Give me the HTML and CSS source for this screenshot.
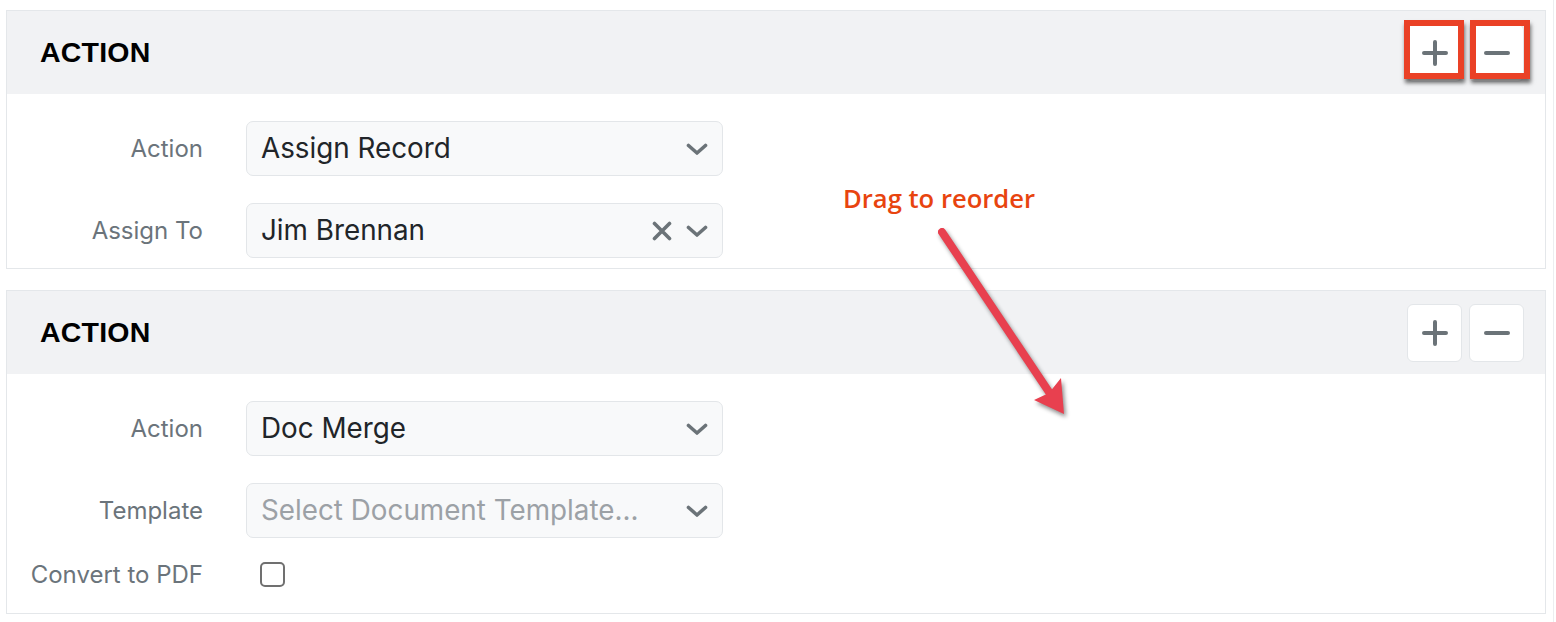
FILE: index.html
```html
<!DOCTYPE html>
<html>
<head>
<meta charset="utf-8">
<link rel="stylesheet" href="styles.css">
</head>
<body>
<div class="page">
  <section class="panel">
    <header class="panel-head">
      <h2 class="panel-title">ACTION</h2>
      <div class="head-btns">
        <button class="icon-btn">
          <svg width="26" height="26" viewBox="0 0 26 26"><path d="M13 2v22M2 13h22" stroke="#6b7378" stroke-width="4" stroke-linecap="round" fill="none"/></svg>
          <span class="mark mark-a"></span>
        </button>
        <button class="icon-btn">
          <svg width="26" height="26" viewBox="0 0 26 26"><path d="M2 13h22" stroke="#6b7378" stroke-width="4" stroke-linecap="round" fill="none"/></svg>
          <span class="mark mark-b"></span>
        </button>
      </div>
    </header>
    <div class="panel-body">
      <div class="row">
        <label class="lbl">Action</label>
        <div class="select"><span class="val">Assign Record</span>
          <span class="icons"><svg class="chev" width="22" height="12" viewBox="0 0 22 12"><path d="M2.5 2.5l8.5 7.5 8.5-7.5" stroke="#6b7378" stroke-width="3.6" stroke-linecap="round" stroke-linejoin="round" fill="none"/></svg></span>
        </div>
      </div>
      <div class="row">
        <label class="lbl">Assign To</label>
        <div class="select"><span class="val">Jim Brennan</span>
          <span class="icons"><svg width="20" height="20" viewBox="0 0 20 20"><path d="M2.5 2.5l15 15M17.5 2.5l-15 15" stroke="#6b7378" stroke-width="3.6" stroke-linecap="round" fill="none"/></svg><svg class="chev" width="22" height="12" viewBox="0 0 22 12"><path d="M2.5 2.5l8.5 7.5 8.5-7.5" stroke="#6b7378" stroke-width="3.6" stroke-linecap="round" stroke-linejoin="round" fill="none"/></svg></span>
        </div>
      </div>
    </div>
  </section>

  <section class="panel">
    <header class="panel-head">
      <h2 class="panel-title">ACTION</h2>
      <div class="head-btns">
        <button class="icon-btn">
          <svg width="26" height="26" viewBox="0 0 26 26"><path d="M13 2v22M2 13h22" stroke="#6b7378" stroke-width="4" stroke-linecap="round" fill="none"/></svg>
        </button>
        <button class="icon-btn">
          <svg width="26" height="26" viewBox="0 0 26 26"><path d="M2 13h22" stroke="#6b7378" stroke-width="4" stroke-linecap="round" fill="none"/></svg>
        </button>
      </div>
    </header>
    <div class="panel-body">
      <div class="row">
        <label class="lbl">Action</label>
        <div class="select"><span class="val">Doc Merge</span>
          <span class="icons"><svg class="chev" width="22" height="12" viewBox="0 0 22 12"><path d="M2.5 2.5l8.5 7.5 8.5-7.5" stroke="#6b7378" stroke-width="3.6" stroke-linecap="round" stroke-linejoin="round" fill="none"/></svg></span>
        </div>
      </div>
      <div class="row">
        <label class="lbl">Template</label>
        <div class="select"><span class="val placeholder">Select Document Template...</span>
          <span class="icons"><svg class="chev" width="22" height="12" viewBox="0 0 22 12"><path d="M2.5 2.5l8.5 7.5 8.5-7.5" stroke="#6b7378" stroke-width="3.6" stroke-linecap="round" stroke-linejoin="round" fill="none"/></svg></span>
        </div>
      </div>
      <div class="row row-check">
        <label class="lbl">Convert to PDF</label>
        <span class="checkbox"></span>
      </div>
    </div>
  </section>

  <div class="annot-text">Drag to reorder</div>
  <svg class="annot-arrow" width="170" height="220" viewBox="0 0 170 220">
    <path d="M22 17L131 180" stroke="#e8404f" stroke-width="8" stroke-linecap="round" fill="none"/>
    <path d="M144 199L141 163L129 178L114 185Z" fill="#e8404f"/>
  </svg>
</div>
</body>
</html>
```

FILE: styles.css
```css
* { box-sizing: border-box; }
html, body { margin: 0; padding: 0; background: #fff; }
body { font-family: Inter, "Noto Sans", sans-serif; }

.page {
  position: relative;
  width: 1554px;
  height: 622px;
  padding: 10px 0 0 6px;
  border-right: 1px solid #eceef0;
}

.panel {
  width: 1540px;
  border: 1px solid #e4e7ea;
  margin-bottom: 21px;
}

.panel-head {
  height: 83px;
  background: #f1f2f4;
  display: flex;
  align-items: center;
  justify-content: space-between;
  padding: 0 21px 0 33px;
}

.panel-title {
  margin: 0;
  font-family: "Liberation Sans", Arial, sans-serif;
  font-weight: bold;
  font-size: 28.5px;
  color: #000;
  letter-spacing: 0.2px;
}

.head-btns { display: flex; gap: 7px; }

.icon-btn {
  position: relative;
  width: 55px;
  height: 58px;
  background: #fff;
  border: 1px solid #e3e6e9;
  border-radius: 6px;
  padding: 0;
  display: flex;
  align-items: center;
  justify-content: center;
}

.mark {
  position: absolute;
  top: -5px;
  width: 60px;
  height: 59px;
  border: 6px solid #ea4126;
  box-shadow: 1px 4px 4px rgba(0, 0, 0, 0.55);
}
.mark-a { left: -4px; }
.mark-b { left: 0px; }

.panel-body {
  padding: 27px 0 10px 0;
  display: flex;
  flex-direction: column;
  gap: 27px;
}

.row {
  display: flex;
  align-items: center;
  gap: 43px;
}

.lbl {
  width: 196px;
  text-align: right;
  font-size: 24px;
  color: #6b747b;
  margin-top: -1px;
}

.select {
  width: 477px;
  height: 55px;
  background: #f8f9fa;
  border: 1px solid #e3e6e9;
  border-radius: 7px;
  display: flex;
  align-items: center;
  justify-content: space-between;
  padding: 0 14px 0 14px;
}

.val {
  font-size: 27.8px;
  color: #212529;
  margin-top: -1px;
}
.val.placeholder { color: #9ca1a6; }

.icons { display: flex; align-items: center; gap: 14px; }
.chev { margin-top: 1px; }

.row-check {
  margin-top: -3px;
  height: 25px;
  margin-bottom: 16px;
}

.checkbox {
  width: 25px;
  height: 25px;
  border: 2px solid #707070;
  border-radius: 5px;
  background: #fff;
  margin-left: 14px;
}

.annot-text {
  position: absolute;
  left: 843px;
  top: 181px;
  font-family: "Open Sans", sans-serif;
  font-weight: 600;
  font-size: 25.6px;
  color: #e8440f;
}

.annot-arrow {
  position: absolute;
  left: 920px;
  top: 215px;
  filter: drop-shadow(2px 3px 2px rgba(0, 0, 0, 0.45));
}
```
